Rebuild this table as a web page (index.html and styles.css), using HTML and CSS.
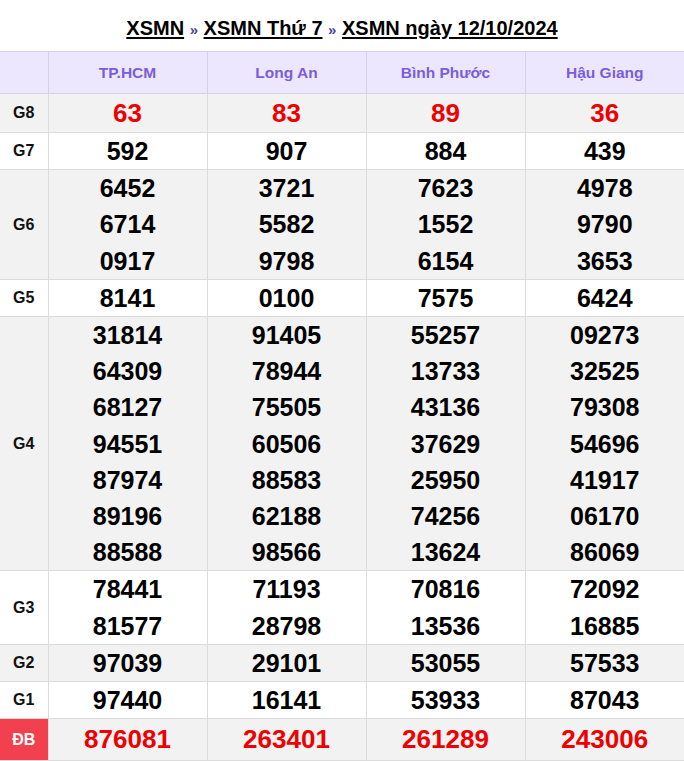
FILE: index.html
```html
<!DOCTYPE html>
<html lang="vi">
<head>
<meta charset="utf-8">
<title>XSMN ngày 12/10/2024</title>
<link rel="stylesheet" href="styles.css">
</head>
<body>
<div class="wrap">
  <h2 class="title">
    <a href="#">XSMN</a> <span class="sep">»</span> <a href="#">XSMN Thứ 7</a> <span class="sep">»</span> <a href="#">XSMN ngày 12/10/2024</a>
  </h2>
  <table class="kq">
    <colgroup>
      <col class="c-label">
      <col class="c-prov"><col class="c-prov"><col class="c-prov"><col class="c-prov">
    </colgroup>
    <thead>
      <tr class="head">
        <th></th>
        <th>TP.HCM</th>
        <th>Long An</th>
        <th>Bình Phước</th>
        <th>Hậu Giang</th>
      </tr>
    </thead>
    <tbody>
      <tr class="gray g8">
        <td class="lbl">G8</td>
        <td><div class="n red">63</div></td>
        <td><div class="n red">83</div></td>
        <td><div class="n red">89</div></td>
        <td><div class="n red">36</div></td>
      </tr>
      <tr>
        <td class="lbl">G7</td>
        <td><div class="n">592</div></td>
        <td><div class="n">907</div></td>
        <td><div class="n">884</div></td>
        <td><div class="n">439</div></td>
      </tr>
      <tr class="gray">
        <td class="lbl">G6</td>
        <td><div class="n">6452</div><div class="n">6714</div><div class="n">0917</div></td>
        <td><div class="n">3721</div><div class="n">5582</div><div class="n">9798</div></td>
        <td><div class="n">7623</div><div class="n">1552</div><div class="n">6154</div></td>
        <td><div class="n">4978</div><div class="n">9790</div><div class="n">3653</div></td>
      </tr>
      <tr>
        <td class="lbl">G5</td>
        <td><div class="n">8141</div></td>
        <td><div class="n">0100</div></td>
        <td><div class="n">7575</div></td>
        <td><div class="n">6424</div></td>
      </tr>
      <tr class="gray">
        <td class="lbl">G4</td>
        <td><div class="n">31814</div><div class="n">64309</div><div class="n">68127</div><div class="n">94551</div><div class="n">87974</div><div class="n">89196</div><div class="n">88588</div></td>
        <td><div class="n">91405</div><div class="n">78944</div><div class="n">75505</div><div class="n">60506</div><div class="n">88583</div><div class="n">62188</div><div class="n">98566</div></td>
        <td><div class="n">55257</div><div class="n">13733</div><div class="n">43136</div><div class="n">37629</div><div class="n">25950</div><div class="n">74256</div><div class="n">13624</div></td>
        <td><div class="n">09273</div><div class="n">32525</div><div class="n">79308</div><div class="n">54696</div><div class="n">41917</div><div class="n">06170</div><div class="n">86069</div></td>
      </tr>
      <tr>
        <td class="lbl">G3</td>
        <td><div class="n">78441</div><div class="n">81577</div></td>
        <td><div class="n">71193</div><div class="n">28798</div></td>
        <td><div class="n">70816</div><div class="n">13536</div></td>
        <td><div class="n">72092</div><div class="n">16885</div></td>
      </tr>
      <tr class="gray">
        <td class="lbl">G2</td>
        <td><div class="n">97039</div></td>
        <td><div class="n">29101</div></td>
        <td><div class="n">53055</div></td>
        <td><div class="n">57533</div></td>
      </tr>
      <tr>
        <td class="lbl">G1</td>
        <td><div class="n">97440</div></td>
        <td><div class="n">16141</div></td>
        <td><div class="n">53933</div></td>
        <td><div class="n">87043</div></td>
      </tr>
      <tr class="gray db">
        <td class="lbl db-lbl">ĐB</td>
        <td><div class="n red">876081</div></td>
        <td><div class="n red">263401</div></td>
        <td><div class="n red">261289</div></td>
        <td><div class="n red">243006</div></td>
      </tr>
    </tbody>
  </table>
</div>
</body>
</html>
```
FILE: styles.css
```css
html, body {
  margin: 0;
  padding: 0;
  background: #ffffff;
}

body {
  font-family: "Liberation Sans", Arial, Helvetica, sans-serif;
  color: #000;
}

.wrap {
  width: 684px;
}

.title {
  margin: 0;
  height: 51px;
  padding-top: 17px;
  box-sizing: border-box;
  text-align: center;
  font-size: 20px;
  font-weight: bold;
  line-height: 22px;
}

.title a {
  color: #000;
  text-decoration: underline;
  text-underline-offset: 2px;
  text-decoration-thickness: 1.5px;
}

.sep {
  color: #4b3fa8;
  font-size: 15px;
}

.kq {
  width: 684px;
  border-collapse: collapse;
  table-layout: fixed;
}

.c-label {
  width: 48px;
}

.kq th,
.kq td {
  border: 1px solid #dcdcdc;
  padding: 0;
  text-align: center;
  vertical-align: middle;
}

.kq tr > :first-child {
  border-left: none;
}

.kq tr > :last-child {
  border-right: none;
}

.head th {
  background: #ede7fd;
  color: #7a5ddf;
  font-size: 15.5px;
  font-weight: bold;
  height: 41px;
  border-color: #d6d0e8;
}

.gray td {
  background: #f2f2f2;
}

.lbl {
  font-size: 16px;
  font-weight: bold;
  color: #111;
}

.n {
  font-size: 25px;
  font-weight: bold;
  line-height: 36.2px;
  color: #000;
}

.g8 .n {
  line-height: 38px;
  font-size: 26px;
}

.n.red {
  color: #ee0000;
}

.db .n {
  font-size: 26px;
  line-height: 41px;
}

.kq td.db-lbl {
  background: #f2404f;
  color: #ffffff;
  font-size: 16px;
}
```
